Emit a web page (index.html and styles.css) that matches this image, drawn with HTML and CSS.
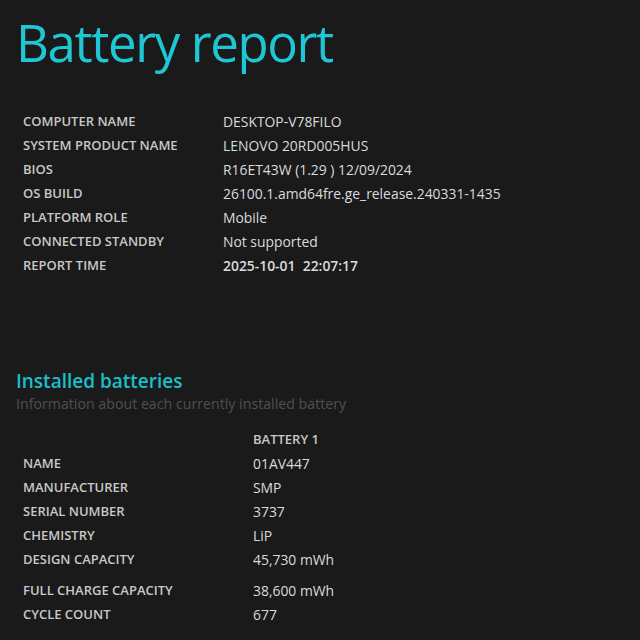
FILE: index.html
```html
<!DOCTYPE html>
<html lang="en">
<head>
  <meta charset="UTF-8">
  <title>Battery report</title>
  <link rel="stylesheet" href="styles.css">
</head>
<body>
  <h1>Battery report</h1>
  <table class="info">
    <tr><td class="label">COMPUTER NAME</td><td>DESKTOP-V78FILO</td></tr>
    <tr><td class="label">SYSTEM PRODUCT NAME</td><td>LENOVO 20RD005HUS</td></tr>
    <tr><td class="label">BIOS</td><td>R16ET43W (1.29 ) 12/09/2024</td></tr>
    <tr><td class="label">OS BUILD</td><td>26100.1.amd64fre.ge_release.240331-1435</td></tr>
    <tr><td class="label">PLATFORM ROLE</td><td>Mobile</td></tr>
    <tr><td class="label">CONNECTED STANDBY</td><td>Not supported</td></tr>
    <tr><td class="label">REPORT TIME</td><td class="strong">2025-10-01 &nbsp;22:07:17</td></tr>
  </table>

  <h2>Installed batteries</h2>
  <div class="explanation">Information about each currently installed battery</div>
  <table class="batteries">
    <tr><td></td><td class="label">BATTERY 1</td></tr>
    <tr><td class="label">NAME</td><td>01AV447</td></tr>
    <tr><td class="label">MANUFACTURER</td><td>SMP</td></tr>
    <tr><td class="label">SERIAL NUMBER</td><td>3737</td></tr>
    <tr><td class="label">CHEMISTRY</td><td>LiP</td></tr>
    <tr><td class="label">DESIGN CAPACITY</td><td>45,730 mWh</td></tr>
    <tr class="spaced"><td class="label">FULL CHARGE CAPACITY</td><td>38,600 mWh</td></tr>
    <tr><td class="label">CYCLE COUNT</td><td>677</td></tr>
  </table>
</body>
</html>
```

FILE: styles.css
```css
body {
  margin: 0;
  padding: 0 16px;
  font-family: 'Open Sans', 'Noto Sans', sans-serif;
  background-color: #1a1a1a;
  color: #dadada;
}
h1 {
  font-size: 51px;
  font-weight: 400;
  color: #1fc6d4;
  margin: 6px 0 31px;
  line-height: 72px;
  letter-spacing: -1.4px;
}
table {
  border-collapse: collapse;
}
td {
  padding: 0 7px;
  height: 24px;
  font-size: 13.9px;
  white-space: nowrap;
}
.label {
  font-size: 13px;
  font-weight: 600;
  color: #c8c8c8;
}
.info td:first-child {
  width: 186px;
}
.strong {
  font-weight: 600;
}
h2 {
  font-size: 19px;
  font-weight: 600;
  color: #1bbfcc;
  margin: 92px 0 0;
  line-height: 24px;
}
.explanation {
  font-size: 14.2px;
  color: #505050;
  line-height: 22px;
  margin-bottom: 12px;
}
.batteries td:first-child {
  width: 216px;
}
.batteries .spaced td {
  padding-top: 7px;
}
```
